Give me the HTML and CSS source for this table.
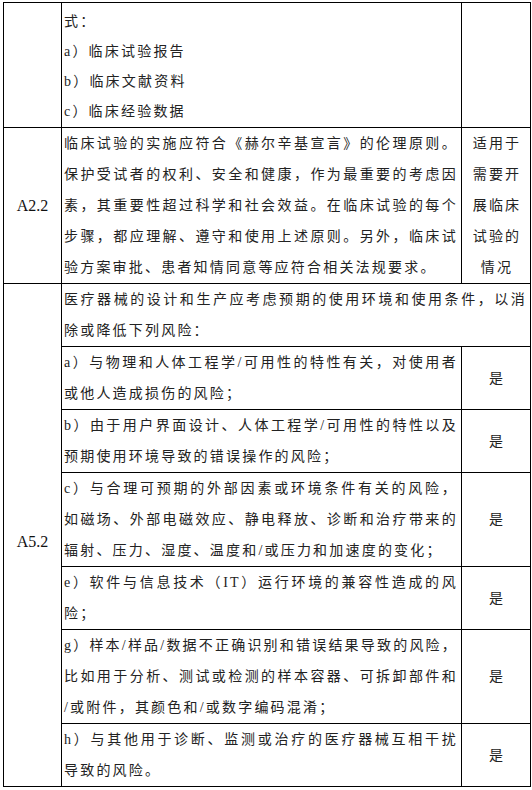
FILE: index.html
```html
<!DOCTYPE html>
<html lang="zh-CN">
<head>
<meta charset="utf-8">
<title>表格</title>
<link rel="stylesheet" href="styles.css">
</head>
<body>
<table class="grid">
  <colgroup>
    <col class="c-label">
    <col class="c-desc">
    <col class="c-app">
  </colgroup>
  <tbody>
    <tr>
      <td class="label"></td>
      <td class="desc first">
        <span class="ln">式：</span>
        <span class="ln">a）临床试验报告</span>
        <span class="ln">b）临床文献资料</span>
        <span class="ln">c）临床经验数据</span>
      </td>
      <td class="app"></td>
    </tr>
    <tr>
      <td class="label">A2.2</td>
      <td class="desc">
        <span class="ln full">临床试验的实施应符合《赫尔辛基宣言》的伦理原则。</span>
        <span class="ln full">保护受试者的权利、安全和健康，作为最重要的考虑因</span>
        <span class="ln full">素，其重要性超过科学和社会效益。在临床试验的每个</span>
        <span class="ln full">步骤，都应理解、遵守和使用上述原则。另外，临床试</span>
        <span class="ln">验方案审批、患者知情同意等应符合相关法规要求。</span>
      </td>
      <td class="app multi">
        <span class="ln">适用于</span>
        <span class="ln">需要开</span>
        <span class="ln">展临床</span>
        <span class="ln">试验的</span>
        <span class="ln">情况</span>
      </td>
    </tr>
    <tr>
      <td class="label label-low" rowspan="7">A5.2</td>
      <td class="desc" colspan="2">
        <span class="ln full">医疗器械的设计和生产应考虑预期的使用环境和使用条件，以消</span>
        <span class="ln">除或降低下列风险：</span>
      </td>
    </tr>
    <tr>
      <td class="desc">
        <span class="ln full">a）与物理和人体工程学/可用性的特性有关，对使用者</span>
        <span class="ln">或他人造成损伤的风险；</span>
      </td>
      <td class="app">是</td>
    </tr>
    <tr>
      <td class="desc">
        <span class="ln full">b）由于用户界面设计、人体工程学/可用性的特性以及</span>
        <span class="ln">预期使用环境导致的错误操作的风险；</span>
      </td>
      <td class="app">是</td>
    </tr>
    <tr>
      <td class="desc">
        <span class="ln full">c）与合理可预期的外部因素或环境条件有关的风险，</span>
        <span class="ln full">如磁场、外部电磁效应、静电释放、诊断和治疗带来的</span>
        <span class="ln">辐射、压力、湿度、温度和/或压力和加速度的变化；</span>
      </td>
      <td class="app">是</td>
    </tr>
    <tr>
      <td class="desc">
        <span class="ln full">e）软件与信息技术（IT）运行环境的兼容性造成的风</span>
        <span class="ln">险；</span>
      </td>
      <td class="app">是</td>
    </tr>
    <tr>
      <td class="desc">
        <span class="ln full">g）样本/样品/数据不正确识别和错误结果导致的风险，</span>
        <span class="ln full">比如用于分析、测试或检测的样本容器、可拆卸部件和</span>
        <span class="ln">/或附件，其颜色和/或数字编码混淆；</span>
      </td>
      <td class="app">是</td>
    </tr>
    <tr>
      <td class="desc">
        <span class="ln full">h）与其他用于诊断、监测或治疗的医疗器械互相干扰</span>
        <span class="ln">导致的风险。</span>
      </td>
      <td class="app">是</td>
    </tr>
  </tbody>
</table>
</body>
</html>
```
FILE: styles.css
```css
html, body {
  margin: 0;
  padding: 0;
  background: #ffffff;
}

body {
  font-family: "Liberation Serif", "Noto Sans CJK SC", serif;
  color: #222222;
}

.grid {
  margin: 2px 0 0 3px;
  width: 527px;
  table-layout: fixed;
  border-collapse: collapse;
}

.c-label { width: 58px; }
.c-desc { width: 400px; }
.c-app { width: 69px; }

.grid td {
  border: 1px solid #000000;
  padding: 0;
  font-size: 14px;
  line-height: 31px;
  vertical-align: middle;
}

.label {
  text-align: center;
  font-size: 16px !important;
  color: #111111;
}

.label-low {
  padding-top: 12px !important;
}

.desc {
  padding: 0 3px 0 2px !important;
  letter-spacing: 2.2px;
  text-align: left;
}

.desc.first {
  padding-top: 4px !important;
  line-height: 30px !important;
}

.ln {
  display: block;
  white-space: nowrap;
}

.ln.full {
  text-align: justify;
  text-align-last: justify;
}

.app {
  text-align: center;
  letter-spacing: 2.2px;
  padding-left: 2px !important;
}

.app.multi .ln {
  text-align: center;
}
```
